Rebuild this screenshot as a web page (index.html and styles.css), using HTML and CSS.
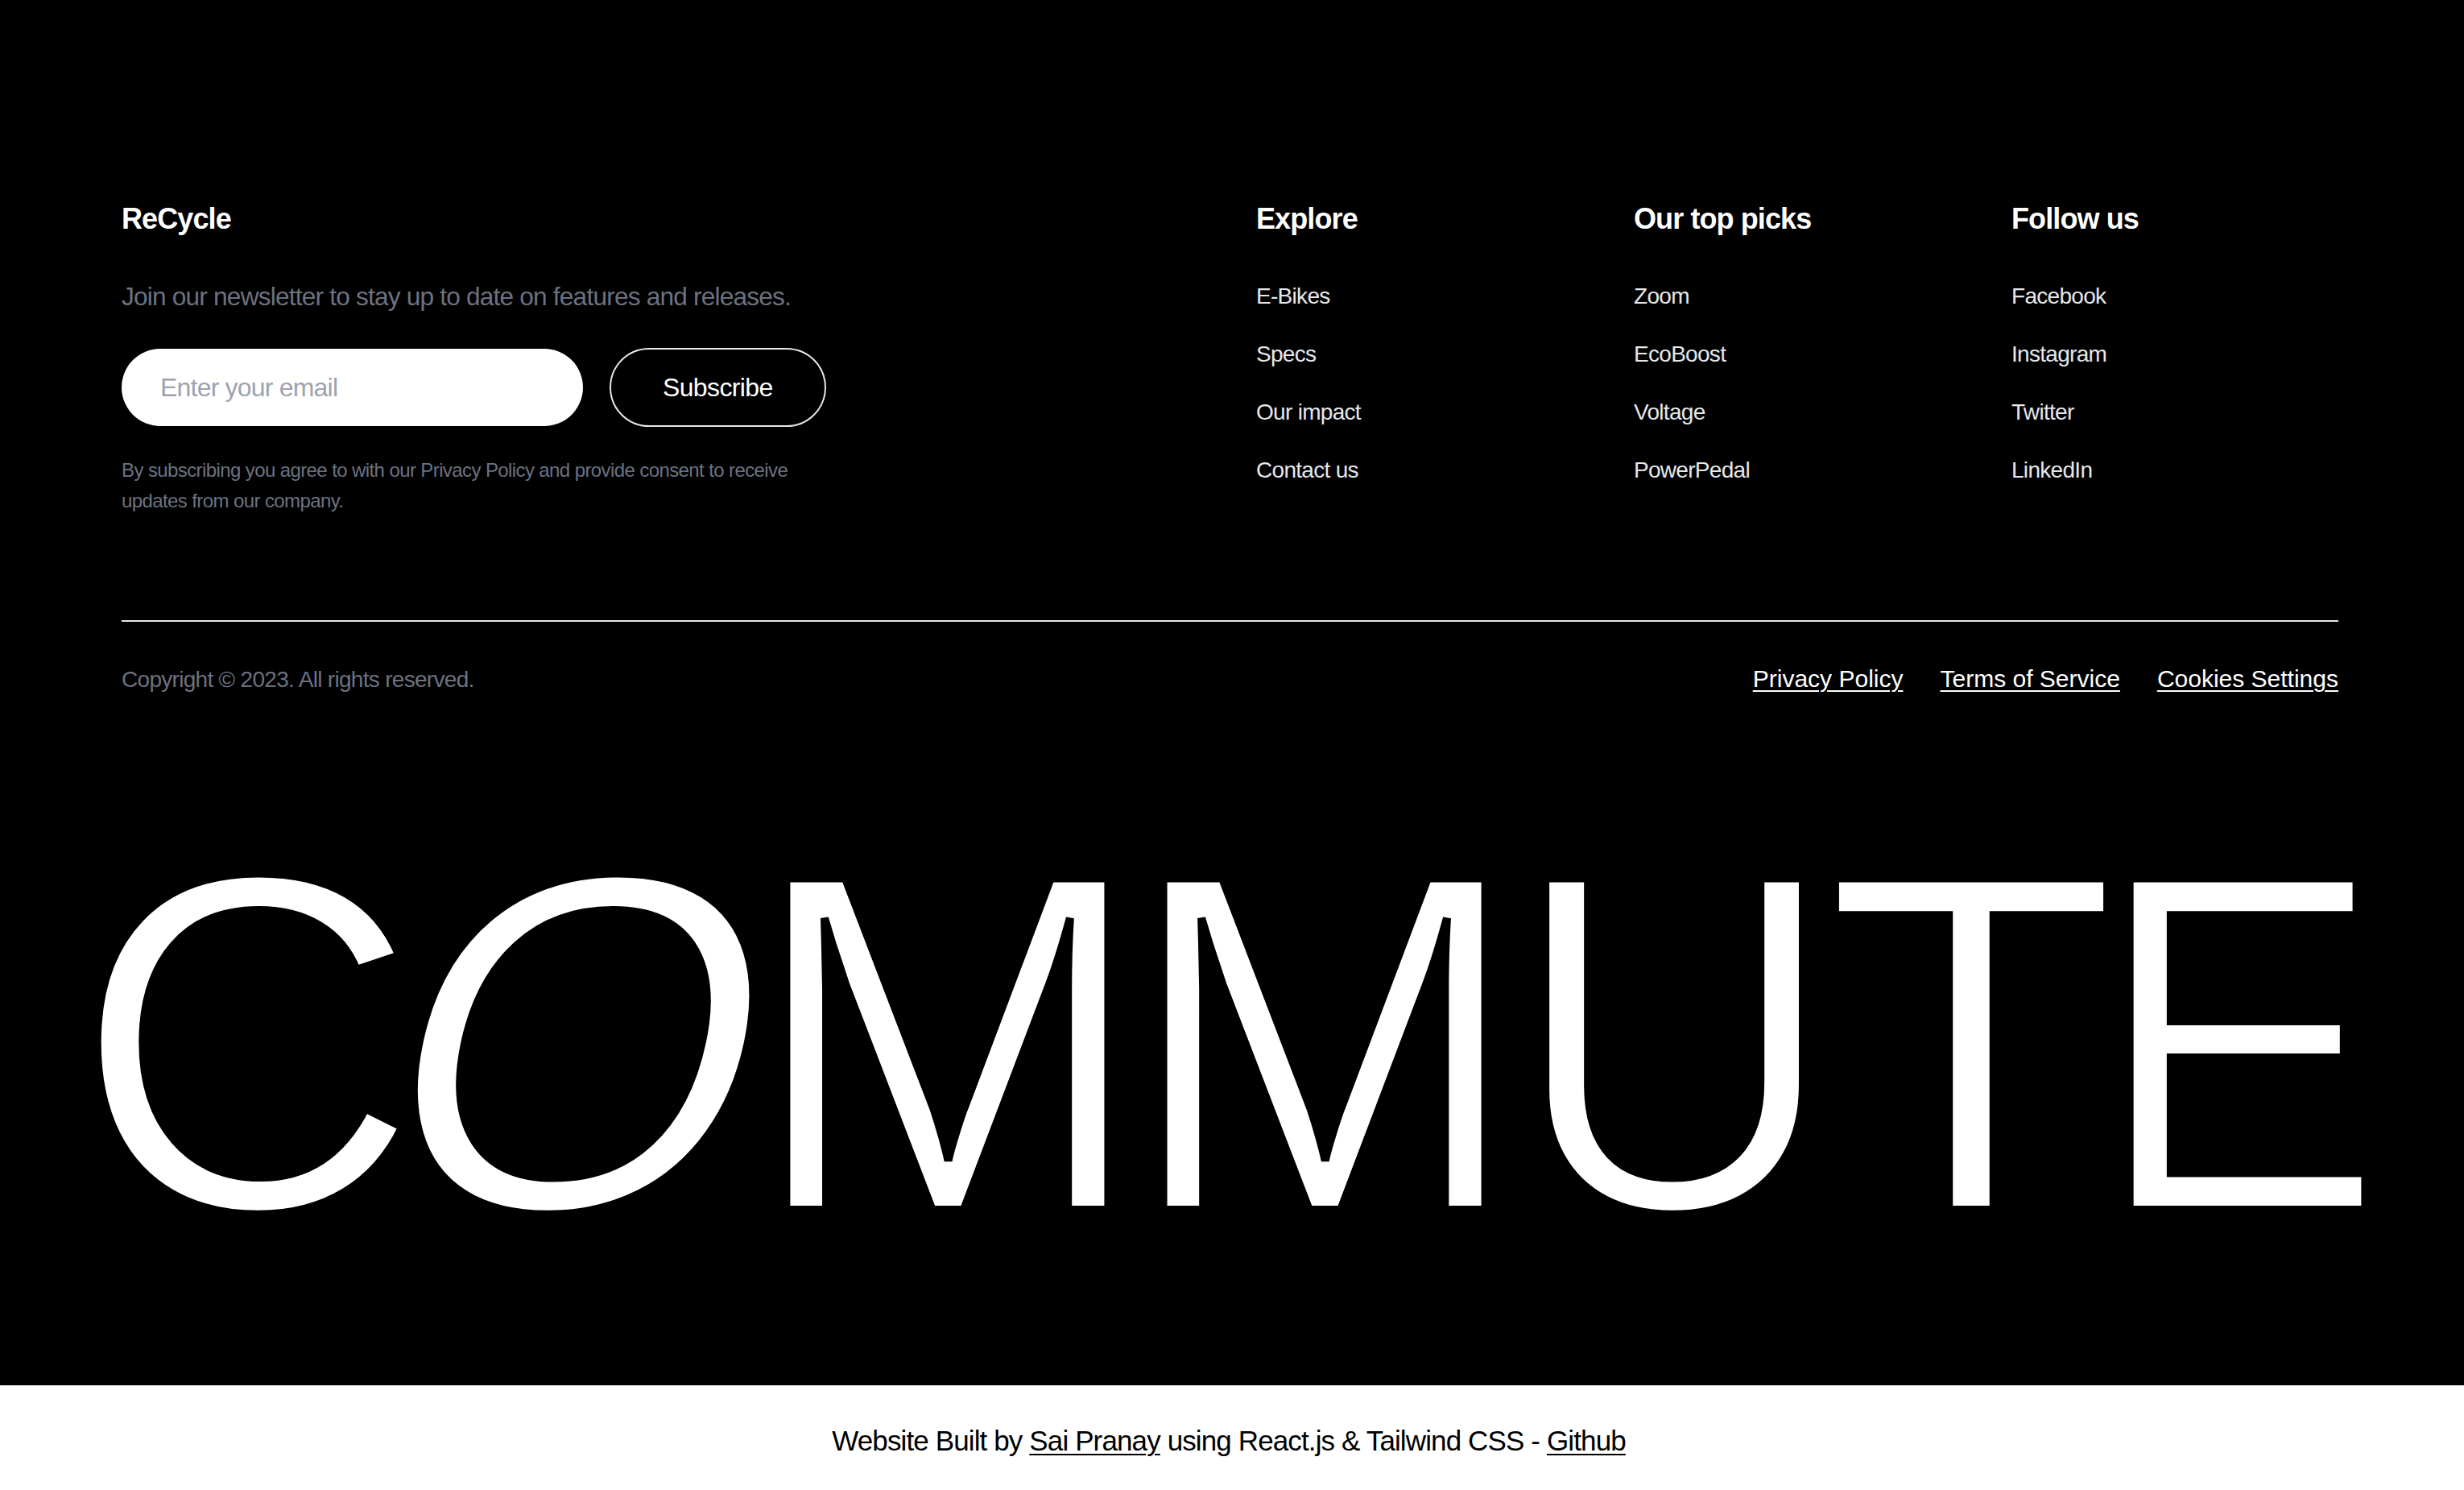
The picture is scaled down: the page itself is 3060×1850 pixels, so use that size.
FILE: index.html
```html
<!DOCTYPE html>
<html lang="en">
<head>
<meta charset="utf-8">
<title>ReCycle — Commute</title>
<link rel="stylesheet" href="styles.css">
</head>
<body>
<footer class="site-footer">
  <div class="footer-inner">
    <div class="footer-top">
      <div class="newsletter">
        <h2 class="brand">ReCycle</h2>
        <p class="lead">Join our newsletter to stay up to date on features and releases.</p>
        <form class="subscribe-form">
          <input class="email-input" type="email" placeholder="Enter your email">
          <button class="subscribe-btn" type="button">Subscribe</button>
        </form>
        <p class="disclaimer">By subscribing you agree to with our Privacy Policy and provide consent to receive updates from our company.</p>
      </div>
      <nav class="footer-nav">
        <div class="nav-col">
          <h3 class="col-title">Explore</h3>
          <ul class="col-links">
            <li><a href="#">E-Bikes</a></li>
            <li><a href="#">Specs</a></li>
            <li><a href="#">Our impact</a></li>
            <li><a href="#">Contact us</a></li>
          </ul>
        </div>
        <div class="nav-col">
          <h3 class="col-title">Our top picks</h3>
          <ul class="col-links">
            <li><a href="#">Zoom</a></li>
            <li><a href="#">EcoBoost</a></li>
            <li><a href="#">Voltage</a></li>
            <li><a href="#">PowerPedal</a></li>
          </ul>
        </div>
        <div class="nav-col">
          <h3 class="col-title">Follow us</h3>
          <ul class="col-links">
            <li><a href="#">Facebook</a></li>
            <li><a href="#">Instagram</a></li>
            <li><a href="#">Twitter</a></li>
            <li><a href="#">LinkedIn</a></li>
          </ul>
        </div>
      </nav>
    </div>
    <hr class="divider">
    <div class="footer-bottom">
      <p class="copyright">Copyright © 2023. All rights reserved.</p>
      <div class="legal">
        <a href="#">Privacy Policy</a>
        <a href="#">Terms of Service</a>
        <a href="#">Cookies Settings</a>
      </div>
    </div>
  </div>
  <div class="wordmark">C<span class="wordmark-o">O</span>MM<span class="wordmark-u">U</span>T<span class="wordmark-e">E</span></div>
</footer>
<div class="credits">Website Built by <a href="#">Sai Pranay</a> using React.js &amp; Tailwind CSS - <a href="#">Github</a></div>
</body>
</html>
```
FILE: styles.css
```css
* {
  box-sizing: border-box;
  margin: 0;
  padding: 0;
}

html,
body {
  background: #000;
}

body {
  font-family: "Liberation Sans", Arial, Helvetica, sans-serif;
  color: #fff;
  height: 1850px;
  overflow: hidden;
}

.site-footer {
  background: #000;
  padding-top: 252px;
  padding-bottom: 131px;
}

.footer-inner {
  padding: 0 156px 0 151px;
}

.footer-top {
  display: flex;
  justify-content: space-between;
  padding-bottom: 129px;
}

.newsletter {
  flex: 1;
}

.brand,
.col-title {
  font-size: 36px;
  line-height: 40px;
  font-weight: 700;
  letter-spacing: -0.025em;
  color: #fff;
}

.lead {
  margin-top: 56px;
  font-size: 31.6px;
  line-height: 40px;
  color: #6b7280;
  letter-spacing: -0.025em;
  white-space: nowrap;
}

.subscribe-form {
  margin-top: 44px;
  display: flex;
  align-items: center;
  gap: 33px;
}

.email-input {
  width: 573px;
  height: 96px;
  border: 0;
  border-radius: 9999px;
  background: #fff;
  padding: 0 48px;
  font-family: inherit;
  font-size: 32px;
  letter-spacing: -0.025em;
  color: #111;
  outline: none;
}

.email-input::placeholder {
  color: #9ca3af;
}

.subscribe-btn {
  height: 98px;
  padding: 0 64px;
  border: 2px solid #e5e7eb;
  border-radius: 9999px;
  background: transparent;
  color: #fff;
  font-family: inherit;
  font-size: 32px;
  letter-spacing: -0.02em;
}

.disclaimer {
  margin-top: 35px;
  max-width: 870px;
  font-size: 24px;
  line-height: 38px;
  color: #6b7280;
  letter-spacing: -0.025em;
}

.footer-nav {
  display: grid;
  grid-template-columns: repeat(3, 406px);
  column-gap: 63px;
}

.col-links {
  list-style: none;
  margin-top: 56px;
  display: flex;
  flex-direction: column;
  gap: 32px;
}

.col-links a {
  display: block;
  font-size: 28px;
  line-height: 40px;
  color: #e5e7eb;
  text-decoration: none;
  letter-spacing: -0.025em;
}

.divider {
  border: 0;
  height: 2px;
  background: #e5e7eb;
}

.footer-bottom {
  margin-top: 51px;
  display: flex;
  justify-content: space-between;
  align-items: baseline;
}

.copyright {
  font-size: 28px;
  line-height: 40px;
  color: #6b7280;
  letter-spacing: -0.025em;
}

.legal {
  display: flex;
  gap: 46px;
}

.legal a {
  font-size: 30px;
  line-height: 40px;
  color: #fff;
  text-decoration: underline;
  text-decoration-thickness: 2px;
  text-underline-offset: 4px;
}

.wordmark {
  margin-top: 138px;
  font-size: 598px;
  line-height: 587px;
  height: 587px;
  text-align: center;
  white-space: nowrap;
  color: #fff;
  letter-spacing: -30px;
  -webkit-text-stroke: 10px #000;
}

.wordmark-o {
  display: inline-block;
  transform: skewX(-12deg);
}

.wordmark-u {
  display: inline-block;
  transform: scaleX(0.94);
}

.wordmark-e {
  display: inline-block;
  transform: scaleX(0.9);
  transform-origin: left center;
}

.credits {
  background: #fff;
  color: #000;
  text-align: center;
  font-size: 35px;
  line-height: 50px;
  letter-spacing: -0.025em;
  padding: 44px 8px 37px 0;
}

.credits a {
  color: inherit;
  text-decoration: underline;
  text-decoration-thickness: 2px;
  text-underline-offset: 4px;
}
```
